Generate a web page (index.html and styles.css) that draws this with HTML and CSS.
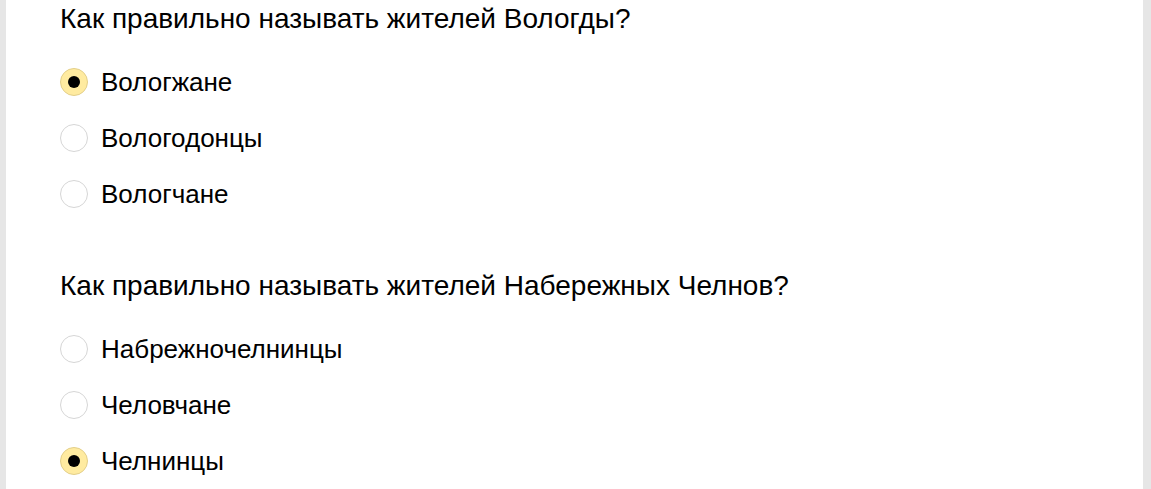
FILE: index.html
```html
<!DOCTYPE html>
<html lang="ru">
<head>
<meta charset="utf-8">
<title>Quiz</title>
<link rel="stylesheet" href="styles.css">
</head>
<body>
<div class="card">
  <section class="question">
    <h2 class="title">Как правильно называть жителей Вологды?</h2>
    <ul class="options">
      <li class="option"><span class="radio checked"></span><span class="label">Вологжане</span></li>
      <li class="option"><span class="radio"></span><span class="label">Вологодонцы</span></li>
      <li class="option"><span class="radio"></span><span class="label">Вологчане</span></li>
    </ul>
  </section>
  <section class="question">
    <h2 class="title">Как правильно называть жителей Набережных Челнов?</h2>
    <ul class="options">
      <li class="option"><span class="radio"></span><span class="label">Набрежночелнинцы</span></li>
      <li class="option"><span class="radio"></span><span class="label">Человчане</span></li>
      <li class="option"><span class="radio checked"></span><span class="label">Челнинцы</span></li>
    </ul>
  </section>
</div>
</body>
</html>
```

FILE: styles.css
```css
html, body {
  margin: 0;
  padding: 0;
  height: 100%;
  overflow: hidden;
}
body {
  background: #e6e6e6;
  font-family: "Liberation Sans", Arial, sans-serif;
  color: #000;
}
.card {
  background: #fff;
  margin: 0 8px 0 6px;
  min-height: 100%;
  padding: 3px 0 0 54px;
  box-sizing: border-box;
}
.question {
  margin-bottom: 48px;
}
.title {
  margin: 0 0 19px;
  font-size: 28px;
  line-height: 32px;
  font-weight: normal;
}
.options {
  list-style: none;
  margin: 0;
  padding: 0;
}
.option {
  display: flex;
  align-items: center;
  height: 56px;
  gap: 13px;
}
.radio {
  width: 28px;
  height: 28px;
  box-sizing: border-box;
  border-radius: 50%;
  border: 1px solid #d6d6d6;
  background: #fff;
  display: flex;
  align-items: center;
  justify-content: center;
  flex: none;
}
.radio.checked {
  background: #ffeba0;
  border-color: #e3cf8a;
}
.radio.checked::after {
  content: "";
  width: 12px;
  height: 12px;
  border-radius: 50%;
  background: #000;
}
.label {
  font-size: 26px;
  line-height: 30px;
}
```
